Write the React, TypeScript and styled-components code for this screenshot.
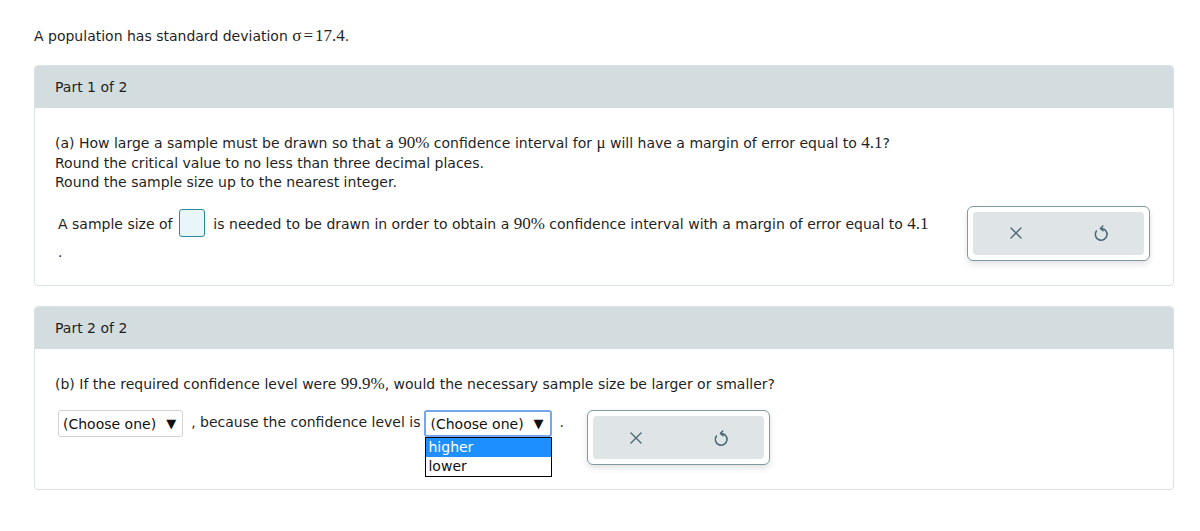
import React from 'react'
import styled, { createGlobalStyle } from 'styled-components'

const GlobalStyle = createGlobalStyle`
  html, body {
    margin: 0;
    padding: 0;
    background: #ffffff;
  }
  body {
    font-family: 'DejaVu Sans', Verdana, sans-serif;
    font-size: 14px;
    color: #1f1f1f;
  }
`

export default function App() {
  return (
    <>
      <GlobalStyle />
      <Page>
        <Intro>
          A population has standard deviation <M>σ</M>
          <Eq>=</Eq>
          <M>17.4</M>.
        </Intro>

        <Panel>
          <PanelHeader>Part 1 of 2</PanelHeader>
          <PanelBody>
            <Question>
              (a) How large a sample must be drawn so that a <M>90%</M> confidence interval for <M>μ</M> will have a margin
              of error equal to <M>4.1</M>?
              <br />
              Round the critical value to no less than three decimal places.
              <br />
              Round the sample size up to the nearest integer.
            </Question>
            <AnswerRow>
              <AnswerText>
                <SentenceLine>
                  A sample size of <AnswerInput /> is needed to be drawn in order to obtain a <M>90%</M> confidence interval
                  with a margin of error equal to <M>4.1</M>
                </SentenceLine>
                <Period>.</Period>
              </AnswerText>
              <ActionBox $wide>
                <Actions />
              </ActionBox>
            </AnswerRow>
          </PanelBody>
        </Panel>

        <Panel>
          <PanelHeader>Part 2 of 2</PanelHeader>
          <PanelBody>
            <Question>
              (b) If the required confidence level were <M>99.9%</M>, would the necessary sample size be larger or smaller?
            </Question>
            <ChoiceRow>
              <SelectButton>
                (Choose one)<Arrow>▼</Arrow>
              </SelectButton>
              <Inline>, because the confidence level is</Inline>
              <SelectWrap>
                <SelectButton $focused>
                  (Choose one)<Arrow>▼</Arrow>
                </SelectButton>
                <OptionList>
                  <OptionItem $active>higher</OptionItem>
                  <OptionItem>lower</OptionItem>
                </OptionList>
              </SelectWrap>
              <Inline>.</Inline>
              <ActionBox>
                <Actions />
              </ActionBox>
            </ChoiceRow>
          </PanelBody>
        </Panel>
      </Page>
    </>
  )
}

function Actions() {
  return (
    <ActionInner>
      <IconButton aria-label="clear">
        <svg width="16" height="16" viewBox="0 0 16 16" fill="none" stroke="#4b6873" strokeWidth="1.4" strokeLinecap="round">
          <path d="M3 3 L13 13 M13 3 L3 13" />
        </svg>
      </IconButton>
      <IconButton aria-label="reset">
        <svg width="18" height="18" viewBox="0 0 16 16" fill="none" stroke="#4b6873" strokeWidth="1.4" strokeLinecap="round" strokeLinejoin="round">
          <path d="M8 4 A5.2 5.2 0 1 1 3.9 6.2" />
          <path d="M9.6 1.8 L7.5 4 L9.8 5.9" />
        </svg>
      </IconButton>
    </ActionInner>
  )
}

const Page = styled.div`
  padding: 26px 26px 20px 34px;
`

const M = styled.span`
  font-family: 'Liberation Serif', 'Times New Roman', serif;
  font-size: 17px;
`

const Eq = styled(M)`
  margin: 0 2px;
`

const Intro = styled.div`
  line-height: 20px;
`

const Panel = styled.section`
  margin-top: 19px;
  border: 1px solid #dce3e5;
  border-radius: 4px;

  & + & {
    margin-top: 20px;
  }
`

const PanelHeader = styled.div`
  height: 42px;
  display: flex;
  align-items: center;
  padding-left: 20px;
  background: #d3dcdf;
  border-radius: 3px 3px 0 0;
`

const PanelBody = styled.div`
  padding: 25px 23px 24px 20px;
`

const Question = styled.div`
  line-height: 19.5px;
`

const AnswerRow = styled.div`
  display: flex;
  align-items: flex-start;
  justify-content: space-between;
  margin-top: 13px;
`

const AnswerText = styled.div`
  padding-top: 4px;
  padding-left: 3px;
`

const SentenceLine = styled.div`
  line-height: 28px;
  white-space: nowrap;
`

const Period = styled.div`
  margin-top: 6px;
  line-height: 16px;
`

const AnswerInput = styled.span`
  display: inline-block;
  vertical-align: middle;
  width: 24px;
  height: 26px;
  margin: -4px 4px 0 2px;
  border: 1px solid #2a8a9b;
  border-radius: 3px;
  background: #e8f5f9;
`

const ChoiceRow = styled.div`
  display: flex;
  align-items: flex-start;
  margin-top: 16px;
  padding-left: 3px;
`

const Inline = styled.span`
  line-height: 24px;
  padding: 0 4px 0 8px;
`

const SelectWrap = styled.div`
  position: relative;
`

const SelectButton = styled.div<{ $focused?: boolean }>`
  box-sizing: border-box;
  height: 27px;
  padding: 0 6px 0 4px;
  display: flex;
  align-items: center;
  border: ${p => (p.$focused ? '2px solid #76a6ec' : '1px solid #d3d3d3')};
  border-radius: 3px;
  background: #ffffff;
  white-space: pre;
  color: #111;
`

const Arrow = styled.span`
  margin-left: 10px;
  font-size: 13px;
`

const OptionList = styled.div`
  position: absolute;
  left: 1px;
  right: 0;
  top: 27px;
  box-sizing: border-box;
  border: 1px solid #000;
  background: #fff;
  z-index: 2;
`

const OptionItem = styled.div<{ $active?: boolean }>`
  height: 19px;
  line-height: 18px;
  padding-left: 2px;
  background: ${p => (p.$active ? '#1e8fff' : '#fff')};
  color: ${p => (p.$active ? '#fff' : '#111')};
`

const ActionBox = styled.div<{ $wide?: boolean }>`
  box-sizing: border-box;
  width: 183px;
  height: 55px;
  padding: 5px;
  margin-left: ${p => (p.$wide ? '0' : '19px')};
  border: 1px solid #7f9aa2;
  border-radius: 6px;
  background: #fff;
  box-shadow: 0 3px 6px rgba(0, 0, 0, 0.12);
`

const ActionInner = styled.div`
  height: 100%;
  display: flex;
  align-items: center;
  justify-content: space-around;
  background: #dfe5e7;
  border-radius: 4px;
`

const IconButton = styled.span`
  width: 40px;
  display: flex;
  justify-content: center;
  align-items: center;
`
